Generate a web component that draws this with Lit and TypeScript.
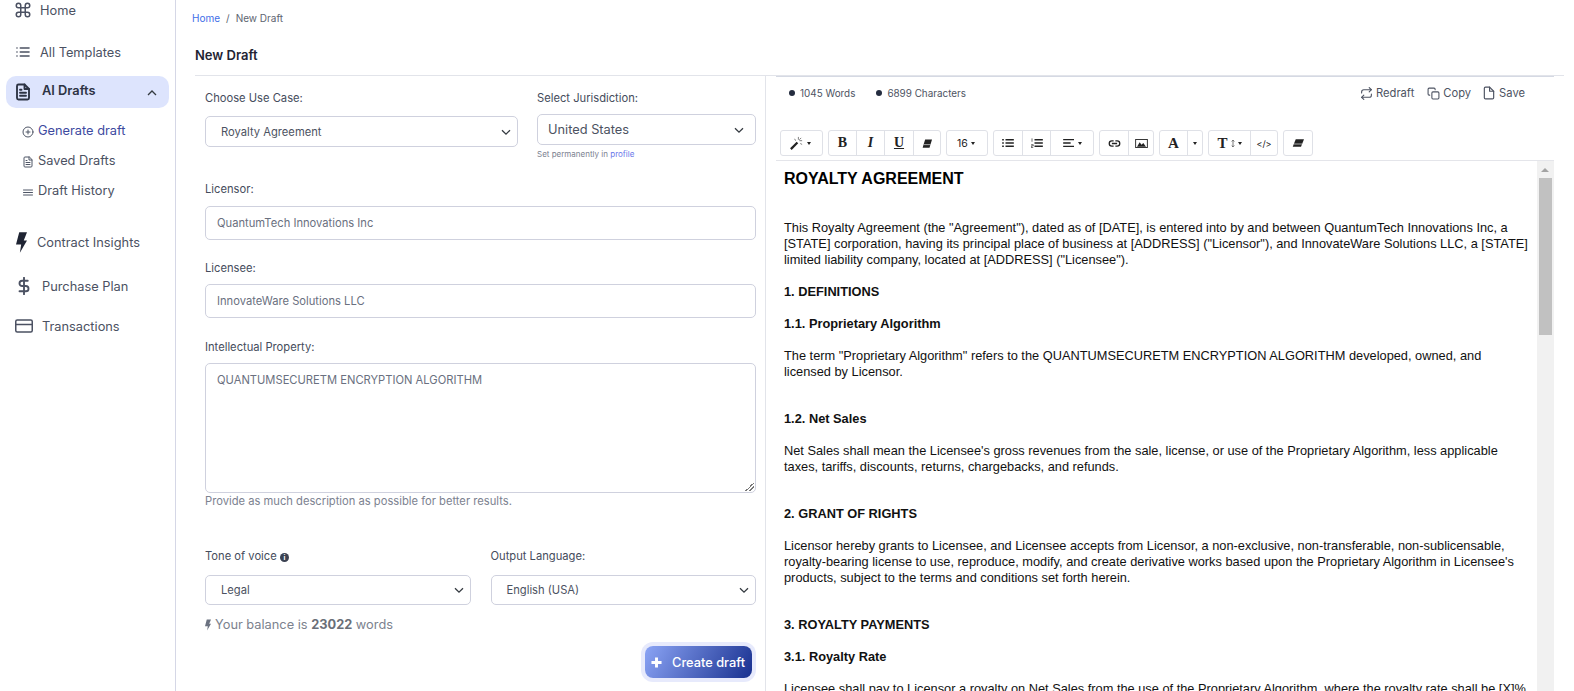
import { LitElement, html, css, svg } from "lit";
import { customElement } from "lit/decorators.js";

const chevron = html`<svg class="chev" viewBox="0 0 12 12" width="12" height="12"><path d="M2 4.2 6 8.2l4-4" fill="none" stroke="#343a40" stroke-width="1.3"/></svg>`;
const caret = html`<span class="caret"></span>`;

// paragraphs of the draft; wide = followed by an extra blank line
const doc: { t: string; b?: boolean; wide?: boolean }[] = [
  { t: 'This Royalty Agreement (the "Agreement"), dated as of [DATE], is entered into by and between QuantumTech Innovations Inc, a [STATE] corporation, having its principal place of business at [ADDRESS] ("Licensor"), and InnovateWare Solutions LLC, a [STATE] limited liability company, located at [ADDRESS] ("Licensee").' },
  { t: "1. DEFINITIONS", b: true },
  { t: "1.1. Proprietary Algorithm", b: true },
  { t: 'The term "Proprietary Algorithm" refers to the QUANTUMSECURETM ENCRYPTION ALGORITHM developed, owned, and licensed by Licensor.', wide: true },
  { t: "1.2. Net Sales", b: true },
  { t: "Net Sales shall mean the Licensee's gross revenues from the sale, license, or use of the Proprietary Algorithm, less applicable taxes, tariffs, discounts, returns, chargebacks, and refunds.", wide: true },
  { t: "2. GRANT OF RIGHTS", b: true },
  { t: "Licensor hereby grants to Licensee, and Licensee accepts from Licensor, a non-exclusive, non-transferable, non-sublicensable, royalty-bearing license to use, reproduce, modify, and create derivative works based upon the Proprietary Algorithm in Licensee's products, subject to the terms and conditions set forth herein.", wide: true },
  { t: "3. ROYALTY PAYMENTS", b: true },
  { t: "3.1. Royalty Rate", b: true },
  { t: "Licensee shall pay to Licensor a royalty on Net Sales from the use of the Proprietary Algorithm, where the royalty rate shall be [X]% of Net Sales." },
];

const icon = (w: number, body: unknown, vb = "0 0 24 24") =>
  html`<svg viewBox=${vb} width=${w} height=${w} fill="none" stroke="currentColor" stroke-width="2" stroke-linecap="round" stroke-linejoin="round">${body}</svg>`;

const icons = {
  cmd: svg`<path d="M18 3a3 3 0 0 0-3 3v12a3 3 0 1 0 3-3H6a3 3 0 1 0 3 3V6a3 3 0 1 0-3 3h12a3 3 0 0 0 0-6z"/>`,
  list: svg`<path d="M8 6h13M8 12h13M8 18h13M3 6h.01M3 12h.01M3 18h.01"/>`,
  file: svg`<path d="M14 2H6a2 2 0 0 0-2 2v16a2 2 0 0 0 2 2h12a2 2 0 0 0 2-2V8z"/><path d="M14 2v6h6M16 13H8M16 17H8M10 9H8"/>`,
  plus: svg`<circle cx="12" cy="12" r="10"/><path d="M12 8v8M8 12h8"/>`,
  dollar: svg`<path d="M12 1v22M17 5H9.5a3.5 3.5 0 0 0 0 7h5a3.5 3.5 0 0 1 0 7H6"/>`,
  card: svg`<rect x="1" y="4" width="22" height="16" rx="2"/><path d="M1 10h22"/>`,
  repeat: svg`<path d="m17 1 4 4-4 4"/><path d="M3 11V9a4 4 0 0 1 4-4h14M7 23l-4-4 4-4"/><path d="M21 13v2a4 4 0 0 1-4 4H3"/>`,
  copy: svg`<rect x="9" y="9" width="13" height="13" rx="2"/><path d="M5 15H4a2 2 0 0 1-2-2V4a2 2 0 0 1 2-2h9a2 2 0 0 1 2 2v1"/>`,
  save: svg`<path d="M13 2H6a2 2 0 0 0-2 2v16a2 2 0 0 0 2 2h12a2 2 0 0 0 2-2V9z"/><path d="M13 2v7h7"/>`,
};

const bolt = (w: number, h: number, c: string) =>
  html`<svg viewBox="0 0 34 63" width=${w} height=${h}><path d="M10 0H34L24 25H34L12 63L16 38H0z" fill=${c}/></svg>`;
const eraser = (w: number, h: number) =>
  html`<svg viewBox="0 0 16 12" width=${w} height=${h} preserveAspectRatio="none"><path d="M5 .5h11l-4 11H1z" fill="#222"/><path d="M2.6 7.5h11" stroke="#fff" stroke-width=".9"/></svg>`;

@customElement("app-root")
export class AppRoot extends LitElement {
  static styles = css`
    :host { display: block; height: 691px; overflow: hidden; font-family: Inter, "Liberation Sans", sans-serif; color: #4a5263; background: #fff; }
    .page { display: flex; height: 691px; }

    .side { width: 175px; flex: none; border-right: 1px solid #d5d7e6; font-size: 12.8px; }
    .nav { display: flex; align-items: center; color: #4b5162; white-space: nowrap; }
    .nav svg { flex: none; }
    .n-home { height: 20px; padding-left: 14px; gap: 8px; }
    .n-tpl { height: 20px; margin-top: 22px; padding-left: 15px; gap: 9px; }
    .n-tpl svg, .n-plan svg { stroke-width: 2.5; }
    .n-ai { width: 163px; height: 32px; box-sizing: border-box; margin: 14px 0 0 6px; padding: 0 11px 0 8px; gap: 10px; background: #dde4fd; border-radius: 10px; color: #2d3344; font-weight: 600; }
    .n-ai svg { stroke-width: 2.5; }
    .n-ai .lbl { margin-bottom: 3px; }
    .n-ai .up { margin-left: auto; margin-top: 1px; }
    .sub { padding-left: 22px; height: 20px; margin-top: 10px; gap: 4px; }
    .sub svg { margin-top: 3px; color: #4f5666; }
    .sub.first { margin-top: 12px; color: #3d4aa0; }
    .n-ins { height: 24px; margin-top: 30px; padding-left: 16px; gap: 10px; }
    .n-plan { height: 20px; margin-top: 22px; padding-left: 15px; gap: 9px; }
    .n-tx { height: 20px; margin-top: 20px; padding-left: 15px; gap: 9px; }

    .main { flex: 1; min-width: 0; padding-left: 19px; }
    .crumb { height: 35px; margin-left: -3px; display: flex; align-items: center; font-size: 10px; gap: 6px; color: #5d6470; }
    .crumb a { color: #3f6ee8; }
    h1 { margin: 0; height: 40px; line-height: 40px; font-size: 13px; font-weight: 600; color: #1f2433; }
    .cols { display: flex; border-top: 1px solid #e2e4ea; margin-right: 10px; height: 615px; }

    .form { width: 571px; flex: none; box-sizing: border-box; padding: 15px 9px 0 10px; border-right: 1px solid #e2e4ea; }
    label { display: block; font-size: 11.2px; line-height: 14px; color: #454c5c; }
    .row { display: grid; }
    .r1 { grid-template-columns: 313px 219px; gap: 19px; }
    .r2 { grid-template-columns: 1fr 1fr; gap: 20px; margin-top: 41px; }
    .ctl { box-sizing: border-box; border: 1px solid #cfd1de; border-radius: 5px; background: #fff; display: flex; align-items: center; font-size: 11.2px; color: #4c5261; }
    .sel { height: 31px; margin-top: 11px; padding: 0 5px 0 15px; justify-content: space-between; }
    .chev { flex: none; }
    .juris { font-size: 12.8px; padding: 0 10px; margin-top: 9px; }
    .hint { font-size: 8px; line-height: 10px; margin-top: 4px; color: #7c8290; }
    .hint a { color: #6a78ea; }
    .r2 .sel { height: 30px; margin-top: 12px; }
    .fld { margin-top: 22px; }
    .fld label + .ctl { margin-top: 9px; }
    .fld.first { margin-top: 23px; }
    .fld.first label + .ctl { margin-top: 10px; }
    .inp { height: 34px; padding-left: 11px; color: #6a7080; }
    .fld.lee { margin-top: 21px; }
    .area { height: 130px; padding: 9px 11px; align-items: flex-start; color: #6a7080; position: relative; }
    .grip { position: absolute; right: 1px; bottom: 1px; width: 9px; height: 9px; background: linear-gradient(135deg, transparent 50%, #777 50%, #777 58%, transparent 58%, transparent 72%, #777 72%, #777 80%, transparent 80%); }
    .help { font-size: 11.2px; line-height: 14px; margin-top: 1px; color: #7c8290; }
    .info { display: inline-block; width: 9px; height: 9px; border-radius: 50%; background: #3b4252; color: #fff; font-size: 7px; line-height: 9px; text-align: center; font-weight: 700; }
    .bal { display: flex; align-items: center; gap: 4px; margin-top: 11px; font-size: 12.8px; line-height: 18px; color: #7c828e; }
    .bal b { color: #6a6f78; font-weight: 700; }
    .act { display: flex; justify-content: flex-end; margin-top: 12px; padding-right: 4px; }
    .btn { display: flex; align-items: center; gap: 10px; height: 32px; padding: 0 7px 0 6px; border-radius: 8px; color: #fff; font-size: 12.8px; font-weight: 500; background: linear-gradient(120deg, #8ba4f5, #18308f); box-shadow: 0 0 0 4px #e7eafc; }

    .ed { flex: 1; min-width: 0; margin: 0 10px; display: flex; flex-direction: column; }
    .stats { display: flex; align-items: center; height: 32px; border-top: 1px solid #d5d9e3; font-size: 9.9px; color: #4d5362; padding: 0 29px 0 13px; }
    .dot { width: 6px; height: 6px; border-radius: 50%; background: #242c3f; margin-right: 5px; }
    .stats .w { margin-right: 21px; }
    .tools { margin-left: auto; display: flex; gap: 13px; font-size: 11.2px; }
    .tools span { display: flex; align-items: center; gap: 3px; }
    .tools .sv { margin-left: -2px; }
    .bar { display: flex; gap: 5px; padding: 21px 0 4px 4px; border-bottom: 1px solid #e4e5ea; }
    .grp { display: flex; height: 26px; box-sizing: border-box; border: 1px solid #dfe1e7; border-radius: 3px; }
    .grp > i { display: flex; align-items: center; justify-content: center; gap: 3px; font-style: normal; border-left: 1px solid #dfe1e7; color: #222; box-sizing: border-box; font-family: "Liberation Serif", serif; font-size: 14px; font-weight: 700; }
    .grp > i:first-child { border-left: 0; }
    .grp > i.wand { padding-right: 4px; }
    .grp > i.num { font-family: Inter, sans-serif; font-weight: 400; font-size: 10.5px; padding-right: 2px; }
    .grp > i.em { font-style: italic; }
    .grp > i.ul { text-decoration: underline; }
    .grp > i.lg { font-size: 15px; }
    .grp > i.code { font-family: Inter, sans-serif; font-weight: 400; font-size: 9px; }
    .caret { display: inline-block; border: 2.5px solid transparent; border-top: 3px solid #222; border-bottom: 0; }
    .body { flex: 1; min-height: 0; position: relative; overflow: hidden; padding: 9px 24px 0 8px; font: 12.8px/16px "Liberation Sans", Arial, sans-serif; color: #111; }
    .body h2 { margin: 0 0 32px; font-size: 16px; line-height: 18px; font-weight: 700; color: #000; }
    .body p { margin: 0 0 16px; }
    .body p.wide { margin-bottom: 31px; }
    .body p.b { font-weight: 700; }
    .track { position: absolute; top: 0; right: 0; bottom: 0; width: 17px; background: #f1f1f1; }
    .thumb { position: absolute; top: 17px; left: 2px; right: 2px; height: 157px; background: #c1c1c1; }
    .up-arr { position: absolute; top: 7px; left: 4px; border: 4px solid transparent; border-bottom: 4px solid #a3a3a3; border-top: 0; }
  `;

  render() {
    return html`<div class="page">
      <aside class="side">
        <div class="nav n-home">${icon(18, icons.cmd)}Home</div>
        <div class="nav n-tpl">${icon(16, icons.list)}All Templates</div>
        <div class="nav n-ai">${icon(18, icons.file)}<span class="lbl">AI Drafts</span>
          <svg class="up" viewBox="0 0 12 12" width="12" height="12"><path d="M2 8l4-4 4 4" fill="none" stroke="#343a40" stroke-width="1.3"/></svg></div>
        <div class="nav sub first">${icon(12, icons.plus)}Generate draft</div>
        <div class="nav sub">${icon(12, icons.file)}Saved Drafts</div>
        <div class="nav sub">${icon(12, svg`<path d="M3 8h18M3 13h18M3 18h18"/>`)}Draft History</div>
        <div class="nav n-ins">${bolt(11, 21, "#1f2433")}Contract Insights</div>
        <div class="nav n-plan">${icon(18, icons.dollar)}Purchase Plan</div>
        <div class="nav n-tx">${icon(18, icons.card)}Transactions</div>
      </aside>
      <main class="main">
        <div class="crumb"><a>Home</a><span>/</span><span>New Draft</span></div>
        <h1>New Draft</h1>
        <div class="cols">
          <section class="form">
            <div class="row r1">
              <div><label>Choose Use Case:</label><div class="ctl sel">Royalty Agreement ${chevron}</div></div>
              <div><label>Select Jurisdiction:</label><div class="ctl sel juris">United States ${chevron}</div>
                <div class="hint">Set permanently in <a>profile</a></div></div>
            </div>
            <div class="fld first"><label>Licensor:</label><div class="ctl inp">QuantumTech Innovations Inc</div></div>
            <div class="fld lee"><label>Licensee:</label><div class="ctl inp">InnovateWare Solutions LLC</div></div>
            <div class="fld"><label>Intellectual Property:</label><div class="ctl area">QUANTUMSECURETM ENCRYPTION ALGORITHM<span class="grip"></span></div></div>
            <div class="help">Provide as much description as possible for better results.</div>
            <div class="row r2">
              <div><label>Tone of voice <span class="info">i</span></label><div class="ctl sel">Legal ${chevron}</div></div>
              <div><label>Output Language:</label><div class="ctl sel">English (USA) ${chevron}</div></div>
            </div>
            <div class="bal">${bolt(6, 12, "#6b7280")}<span>Your balance is <b>23022</b> words</span></div>
            <div class="act"><div class="btn">
              <svg viewBox="0 0 12 12" width="11" height="11"><path d="M6 .5v11M.5 6h11" stroke="#fff" stroke-width="3.2"/></svg>Create draft</div></div>
          </section>
          <section class="ed">
            <div class="stats">
              <span class="dot"></span><span class="w">1045 Words</span>
              <span class="dot"></span><span>6899 Characters</span>
              <div class="tools">
                <span>${icon(13, icons.repeat)}Redraft</span>
                <span>${icon(13, icons.copy)}Copy</span>
                <span class="sv">${icon(14, icons.save)}Save</span>
              </div>
            </div>
            <div class="bar">
              <div class="grp"><i class="wand" style="width:41px"><svg viewBox="0 0 16 16" width="15" height="15"><path d="M2 14 9 7" stroke="#222" stroke-width="2.4"/><path d="M10 1v3M14 5h-3M13 2l-2 2M6 3l1 2M14 9l-2-1" stroke="#555" stroke-width=".8"/></svg>${caret}</i></div>
              <div class="grp">
                <i style="width:27px">B</i><i class="em" style="width:28px">I</i><i class="ul" style="width:29px">U</i><i style="width:27px">${eraser(10, 9)}</i>
              </div>
              <div class="grp"><i class="num" style="width:40px">16 ${caret}</i></div>
              <div class="grp">
                <i style="width:28px"><svg viewBox="0 0 14 12" width="12" height="10"><path d="M0 2h2M4 2h10M0 6h2M4 6h10M0 10h2M4 10h10" stroke="#222" stroke-width="1.8"/></svg></i>
                <i style="width:28px"><svg viewBox="0 0 14 12" width="12" height="10"><path d="M4 2h10M4 6h10M4 10h10" stroke="#222" stroke-width="1.8"/><path d="M1 .5v4M0 8h2.500v1.500H0V11.500h2.500" fill="none" stroke="#222" stroke-width=".8"/></svg></i>
                <i style="width:43px"><svg viewBox="0 0 14 12" width="12" height="10"><path d="M0 2h13M0 6h9M0 10h13" stroke="#222" stroke-width="1.6"/></svg>${caret}</i>
              </div>
              <div class="grp">
                <i style="width:28px"><svg viewBox="0 0 14 8" width="13" height="7"><path d="M6 1H4a3 3 0 0 0 0 6h2M8 1h2a3 3 0 0 1 0 6H8M4 4h6" fill="none" stroke="#222" stroke-width="1.5"/></svg></i>
                <i style="width:25px"><svg viewBox="0 0 14 10" width="13" height="9"><rect x=".5" y=".5" width="13" height="9" fill="none" stroke="#222"/><path d="M2 8.500l3-5 2 3 2-2 3 4z" fill="#222"/></svg></i>
              </div>
              <div class="grp">
                <i class="lg" style="width:27px">A</i><i style="width:15px">${caret}</i>
              </div>
              <div class="grp">
                <i class="lg" style="width:41px">T<svg viewBox="0 0 6 12" width="4" height="9"><path d="M3 1v10M1 3l2-2 2 2M1 9l2 2 2-2" fill="none" stroke="#222" stroke-width=".9"/></svg>${caret}</i>
                <i class="code" style="width:27px">&lt;/&gt;</i>
              </div>
              <div class="grp"><i style="width:28px">${eraser(12, 8)}</i></div>
            </div>
            <div class="body">
              <h2>ROYALTY AGREEMENT</h2>
              ${doc.map((d) => html`<p class="${d.wide ? "wide" : ""} ${d.b ? "b" : ""}">${d.t}</p>`)}
              <div class="track"><span class="up-arr"></span><div class="thumb"></div></div>
            </div>
          </section>
        </div>
      </main>
    </div>`;
  }
}
